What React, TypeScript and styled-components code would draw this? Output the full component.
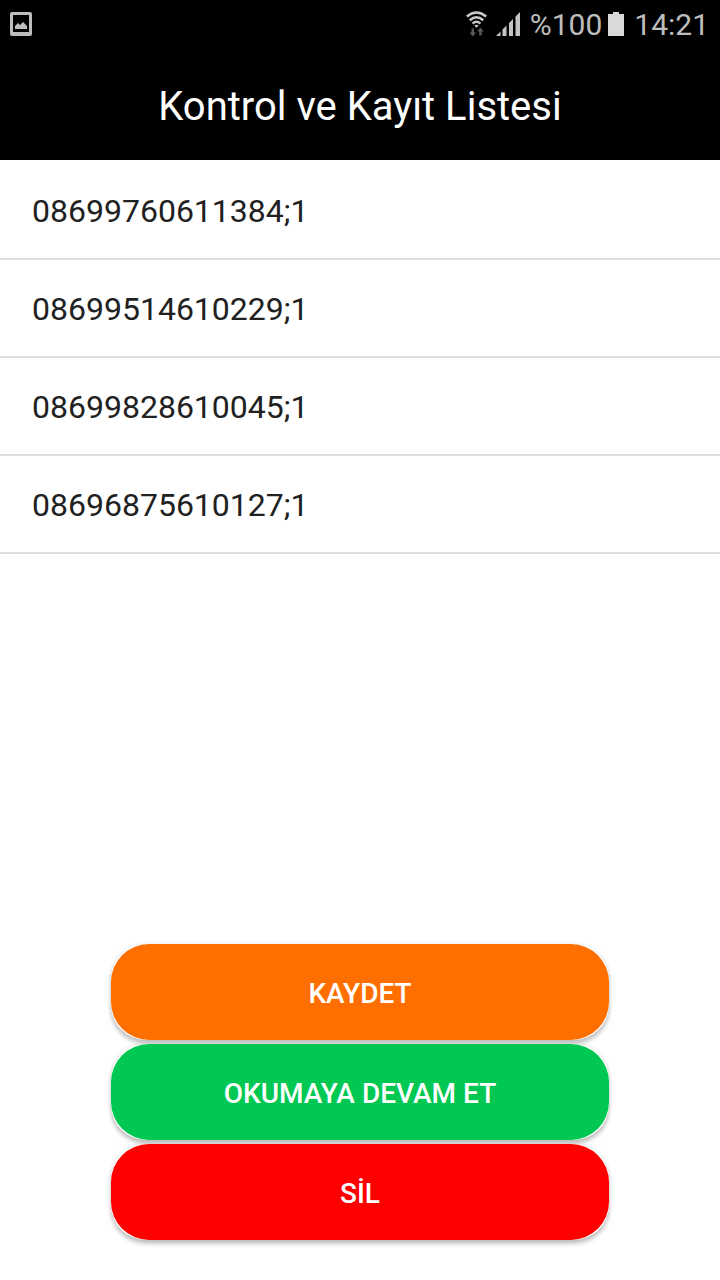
import React from "react";
import styled, { createGlobalStyle } from "styled-components";

const GlobalStyle = createGlobalStyle`
  *, *::before, *::after { box-sizing: border-box; }
  body {
    margin: 0;
    background: #ffffff;
    font-family: Roboto, "Noto Sans", sans-serif;
  }
`;

const Screen = styled.div`
  display: flex;
  flex-direction: column;
  min-height: 100vh;
`;

const StatusBar = styled.div`
  display: flex;
  align-items: center;
  justify-content: space-between;
  height: 48px;
  padding: 0 11px 0 10px;
  background: #000000;
  color: #bdbdbd;
`;

const StatusGroup = styled.div`
  display: flex;
  align-items: center;
`;

const StatusText = styled.span`
  padding-top: 2px;
  font-size: 30px;
  line-height: 46px;
  white-space: nowrap;
`;

const StatusIcon = styled.svg<{ $gap?: number }>`
  display: block;
  flex: none;
  margin-right: ${({ $gap = 0 }) => $gap}px;
`;

const TitleBar = styled.header`
  display: flex;
  align-items: center;
  justify-content: center;
  height: 112px;
  padding-top: 6px;
  background: #000000;
`;

const Title = styled.h1`
  margin: 0;
  color: #ffffff;
  font-size: 40px;
  font-weight: 400;
  line-height: 48px;
`;

const RecordList = styled.ul`
  flex: 1;
  margin: 0;
  padding: 2px 0 0;
  list-style: none;
`;

const Record = styled.li`
  padding: 25px 32px 23px;
  border-bottom: 2px solid #dedede;
  color: #212121;
  font-size: 32px;
  line-height: 48px;
`;

const Actions = styled.div`
  display: flex;
  flex-direction: column;
  gap: 4px;
  padding: 24px 111px 40px;
`;

const ActionButton = styled.button`
  display: block;
  padding: 0;
  border: 0;
  border-radius: 35px;
  background: #ffffff;
  box-shadow: 0 4px 4px rgba(0, 0, 0, 0.22), 0 0 4px rgba(0, 0, 0, 0.1);
  font-family: inherit;
  cursor: pointer;
`;

const ActionFace = styled.span<{ $color: string }>`
  display: block;
  padding: 26px 24px 22px;
  border-radius: 38px;
  background: ${({ $color }) => $color};
  color: #ffffff;
  font-size: 28px;
  font-weight: 500;
  line-height: 48px;
  text-align: center;
`;

const records = [
  "08699760611384;1",
  "08699514610229;1",
  "08699828610045;1",
  "08696875610127;1",
];

const actions = [
  { label: "KAYDET", color: "#ff6f00" },
  { label: "OKUMAYA DEVAM ET", color: "#00c853" },
  { label: "SİL", color: "#ff0000" },
];

const PictureIcon = () => (
  <StatusIcon width="22" height="24" viewBox="0 0 22 24" aria-hidden="true">
    <path
      fillRule="evenodd"
      fill="#bdbdbd"
      d="M2 0H20Q22 0 22 2V22Q22 24 20 24H2Q0 24 0 22V2Q0 0 2 0ZM3 3V20H19V3Z"
    />
    <path fill="#bdbdbd" d="M5 17V14L8 11L10 13L13 10L17 14V17Z" />
  </StatusIcon>
);

const WifiIcon = () => (
  <StatusIcon $gap={8} width="22" height="26" viewBox="0 0 22 26" aria-hidden="true">
    <g fill="none" stroke="#c8c8c8" strokeWidth="2.5">
      <path d="M0.800 5.500Q10.500 -2.500 20.200 5.500" />
      <path d="M3.800 9.200Q10.500 3.200 17.200 9.200" />
      <path d="M6.600 12.600Q10.500 9 14.400 12.600" />
    </g>
    <path fill="#c8c8c8" d="M8.300 14.600Q10.500 12.800 12.700 14.600L10.500 16.800Z" />
    <path fill="#585858" d="M5.500 17.500H8V21.500H10L6.800 25.500L3.500 21.500H5.500Z" />
    <path fill="#585858" d="M13.200 24.500V20.500H11.200L14.400 16.500L17.700 20.500H15.700V24.500Z" />
  </StatusIcon>
);

const SignalIcon = () => (
  <StatusIcon $gap={10} width="24" height="24" viewBox="0 0 24 24" aria-hidden="true">
    <path
      fill="#c4c4c4"
      d="M0 24L4.500 19.500V24ZM6.500 24V17.500L10.500 13.500V24ZM13 24V11L17 7V24ZM19.500 24V4.500L24 0V24Z"
    />
  </StatusIcon>
);

const BatteryIcon = () => (
  <StatusIcon $gap={10} width="16" height="24" viewBox="0 0 16 24" aria-hidden="true">
    <path fill="#d9d9d9" d="M5 0H11V2H16V24H0V2H5Z" />
  </StatusIcon>
);

const BatteryLevel = styled(StatusText)`
  margin-right: 6px;
`;

export default function App() {
  return (
    <Screen>
      <GlobalStyle />
      <StatusBar>
        <PictureIcon />
        <StatusGroup>
          <WifiIcon />
          <SignalIcon />
          <BatteryLevel>%100</BatteryLevel>
          <BatteryIcon />
          <StatusText>14:21</StatusText>
        </StatusGroup>
      </StatusBar>
      <TitleBar>
        <Title>Kontrol ve Kayıt Listesi</Title>
      </TitleBar>
      <RecordList>
        {records.map((record) => (
          <Record key={record}>{record}</Record>
        ))}
      </RecordList>
      <Actions>
        {actions.map(({ label, color }) => (
          <ActionButton key={label} type="button">
            <ActionFace $color={color}>{label}</ActionFace>
          </ActionButton>
        ))}
      </Actions>
    </Screen>
  );
}
